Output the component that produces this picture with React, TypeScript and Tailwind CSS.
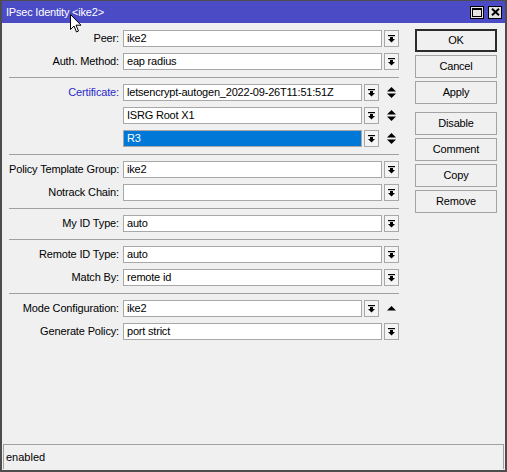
import React from "react";

type Field = {
  label: string;
  value: string;
  extra?: "updown" | "up";
  selected?: boolean;
  link?: boolean;
};

const sections: Field[][] = [
  [
    { label: "Peer:", value: "ike2" },
    { label: "Auth. Method:", value: "eap radius" },
  ],
  [
    { label: "Certificate:", value: "letsencrypt-autogen_2022-09-26T11:51:51Z", extra: "updown", link: true },
    { label: "", value: "ISRG Root X1", extra: "updown" },
    { label: "", value: "R3", extra: "updown", selected: true },
  ],
  [
    { label: "Policy Template Group:", value: "ike2" },
    { label: "Notrack Chain:", value: "" },
  ],
  [{ label: "My ID Type:", value: "auto" }],
  [
    { label: "Remote ID Type:", value: "auto" },
    { label: "Match By:", value: "remote id" },
  ],
  [
    { label: "Mode Configuration:", value: "ike2", extra: "up" },
    { label: "Generate Policy:", value: "port strict" },
  ],
];

const actions = ["OK", "Cancel", "Apply", "Disable", "Comment", "Copy", "Remove"];

function DropIcon() {
  return (
    <svg width="7" height="8" viewBox="0 0 7 8">
      <rect x="0" y="0" width="7" height="1.2" fill="#000" />
      <rect x="2" y="2" width="3" height="2" fill="#000" />
      <polygon points="0,4 7,4 3.5,7.6" fill="#000" />
    </svg>
  );
}

function UpDown({ only }: { only?: boolean }) {
  return (
    <svg width="9" height="11" viewBox="0 0 9 11">
      {only ? (
        <polygon points="4.5,3 9,7.5 0,7.5" fill="#000" />
      ) : (
        <>
          <polygon points="4.5,0 9,4.5 0,4.5" fill="#000" />
          <polygon points="0,6.5 9,6.5 4.5,11" fill="#000" />
        </>
      )}
    </svg>
  );
}

function FieldRow({ f }: { f: Field }) {
  return (
    <div className="flex h-[17px] items-center">
      <div
        className={`w-[110px] shrink-0 whitespace-nowrap text-right tracking-[-0.15px] ${
          f.link ? "text-[#2a2ac8]" : "text-black"
        }`}
      >
        {f.label}
      </div>
      <div
        className={`ml-[4px] flex h-full min-w-0 flex-1 items-center whitespace-nowrap border border-[#a8a8a8] pl-[3px] tracking-[-0.2px] ${
          f.selected ? "bg-[#0078d7] text-white" : "bg-white text-black"
        }`}
      >
        {f.value}
      </div>
      <div className="ml-[2px] flex h-full w-[15px] shrink-0 items-center justify-center border border-[#a8a8a8] bg-[#f4f4f4]">
        <DropIcon />
      </div>
      {f.extra && (
        <div className="flex h-full w-[20px] shrink-0 items-center justify-end pr-[3px]">
          <UpDown only={f.extra === "up"} />
        </div>
      )}
    </div>
  );
}

export default function App() {
  return (
    <div className="relative flex h-[472px] w-[507px] flex-col border-2 border-t border-[#4d4d4d] bg-[#f0f0f0] font-['Liberation_Sans',Arial,sans-serif] text-[11px] leading-none">
      {/* title bar */}
      <div className="flex h-[22px] shrink-0 items-center justify-between bg-[#4b4bc6] pl-[4px] pr-[3px]">
        <span className="text-[11px] tracking-[-0.2px] text-white">IPsec Identity &lt;ike2&gt;</span>
        <div className="flex gap-[4px]">
          <div className="flex h-[13px] w-[14px] items-center justify-center border border-black bg-[#e4e4e4]">
            <svg width="10" height="9" viewBox="0 0 10 9">
              <rect x="0.5" y="0.5" width="9" height="8" fill="none" stroke="#000" />
              <rect x="0" y="0" width="10" height="2" fill="#000" />
            </svg>
          </div>
          <div className="flex h-[13px] w-[14px] items-center justify-center border border-black bg-[#e4e4e4]">
            <svg width="9" height="8" viewBox="0 0 9 8">
              <path d="M1 0.8 L8 7.2 M8 0.8 L1 7.2" stroke="#000" strokeWidth="2" />
            </svg>
          </div>
        </div>
      </div>

      {/* mouse pointer over the caption */}
      <svg className="absolute left-[68px] top-[13px]" width="12" height="19" viewBox="0 0 12 19">
        <path d="M0.5 0.5 L0.5 15.5 L4 12 L6.5 18 L8.5 17 L6 11.2 L11 11.2 Z" fill="#fff" stroke="#000" strokeWidth="1" />
      </svg>

      <div className="flex flex-1 pl-[7px] pr-[8px]">
        <div className="w-[390px] pt-[7px]">
          {sections.map((rows, i) => (
            <div key={i}>
              {i > 0 && <div className="mb-[6px] mt-[7px] h-px bg-[#a0a0a0]" />}
              <div className="flex flex-col gap-[6px]">
                {rows.map((f, j) => (
                  <FieldRow key={j} f={f} />
                ))}
              </div>
            </div>
          ))}
        </div>

        <div className="ml-[16px] flex w-[82px] flex-col pt-[6px]">
          {actions.map((a, i) => (
            <div
              key={a}
              className={`flex h-[23px] items-center justify-center bg-[#f0f0f0] tracking-[-0.2px] text-black ${
                i === 0 ? "border-2 border-[#2b2b2b]" : "border border-[#a3a3a3]"
              } ${i === 0 ? "" : i === 3 ? "mt-[8px]" : "mt-[3px]"}`}
            >
              {a}
            </div>
          ))}
        </div>
      </div>

      {/* status bar */}
      <div className="mx-[1px] mb-[1px] flex h-[25px] shrink-0 items-center border-l border-r border-t border-[#a0a0a0] pl-[2px] text-black">
        enabled
      </div>
    </div>
  );
}
